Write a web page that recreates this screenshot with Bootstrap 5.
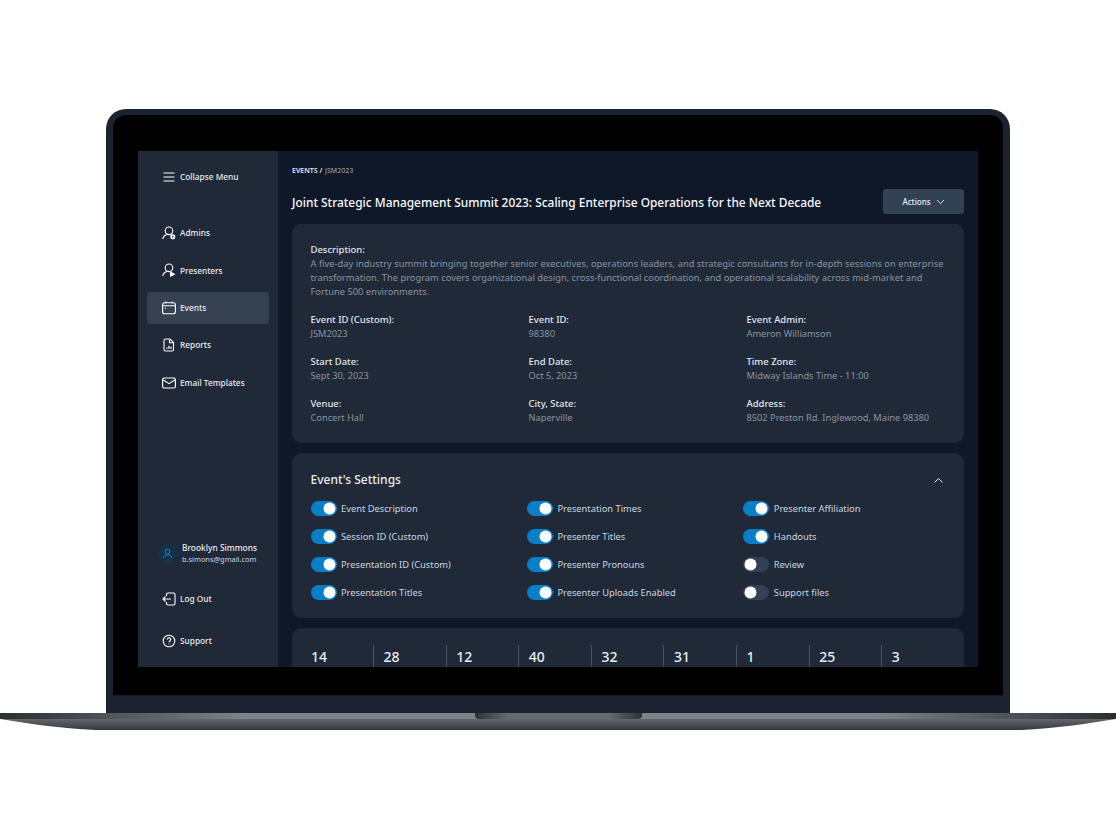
<!DOCTYPE html>
<html lang="en">
<head>
    <meta charset="UTF-8">
    <meta name="viewport" content="width=device-width, initial-scale=1.0">
    <title>Events - JSM2023</title>
    <link href="https://cdn.jsdelivr.net/npm/bootstrap@5.3.0/dist/css/bootstrap.min.css" rel="stylesheet">
    <style>
        html, body { height: 840px; overflow: hidden; background: #fff; }
        body { font-family: "Noto Sans", sans-serif; padding-top: 109px; }

        /* laptop */
        .lid { width: 904px; height: 604px; margin: 0 auto; padding: 6px 7px 18px; background: #1b2230; border-radius: 20px 20px 0 0; }
        .bezel { height: 581px; padding: 36px 25px 28px; background: #000; border-radius: 13px 13px 0 0; border-bottom: 1px solid #141925; }
        .base { display: block; width: 1116px; height: 18px; }

        /* app */
        .app { height: 516px; overflow: hidden; background: #0f1829; color: #fff; }
        .side { width: 140px; background: #1f2937; padding: 10px 9.5px 10px 9px; }
        .side-link { height: 32px; padding: 1px 0 0 15px; gap: 4px; font-size: 8.3px; font-weight: 500; color: #e8edf3; border-radius: 4px; margin-bottom: 5.4px; text-decoration: none; }
        .side-link svg { width: 14px; height: 14px; flex: none; margin-top: -1px; }
        .side-link.on { background: #364152; }
        .collapse-row { margin-bottom: 24px; }
        .who { padding-left: 11px; gap: 5px; margin-bottom: 18.5px; }
        .who-pic { width: 19px; height: 19px; border-radius: 50%; background: #16324a; }
        .who-name { font-size: 8.4px; font-weight: 500; line-height: 11px; color: #e8edf3; }
        .who-mail { font-size: 7.4px; line-height: 12px; color: #cbd5e1; }
        .side-out { margin-bottom: 10px; }
        .side-end { margin-bottom: 0; }

        .main-col { padding: 0 14px; min-width: 0; }
        .crumbs { font-size: 7px; font-weight: 600; line-height: 10px; padding-top: 15px; color: #e2e8f0; }
        .crumbs span { font-weight: 400; color: #a3adba; margin-left: 1px; }
        .title-row { margin-top: 8px; height: 40px; padding-bottom: 5px; }
        .page-title { font-size: 11.92px; font-weight: 500; margin: 0; padding-top: 1px; color: #f8fafc; }
        .act-btn { width: 81px; height: 25px; padding: 0; font-size: 8px; font-weight: 500; color: #e8edf3; background: #334155; border: 0; border-radius: 3px; gap: 5px; }
        .panel { background: #1f2937; border-radius: 9px; padding: 19px 18.5px 0; margin-bottom: 10px; }
        .lbl { font-size: 9.45px; font-weight: 500; line-height: 14px; color: #e2e8f0; }
        .val { font-size: 9.25px; line-height: 14px; color: #8a94a3; }
        .desc { font-size: 9.34px; }
        .info-grid { display: grid; grid-template-columns: repeat(3, 218px); row-gap: 14px; margin-top: 14px; }
        .info-panel { height: 219px; }
        .set-panel { height: 165px; padding-top: 18px; }
        .set-title { font-size: 12px; font-weight: 500; color: #e8edf3; margin: 0; line-height: 18px; }
        .set-grid { display: grid; grid-template-columns: repeat(3, 216.4px); row-gap: 13px; margin-top: 12px; }
        .chev { margin-right: 1.5px; }
        .tog { min-height: 15px; padding-left: 0; margin: 0; gap: 4.5px; }
        .tog .form-check-input { width: 26px; height: 15px; margin: 0; float: none; border: 0; background-color: #334155; background-image: url("data:image/svg+xml,%3csvg xmlns='http://www.w3.org/2000/svg' viewBox='-4 -4 8 8'%3e%3ccircle r='3.2' fill='%23fff'/%3e%3c/svg%3e"); }
        .tog .form-check-input:checked { background-color: #0a7fc9; }
        .tog .form-check-label { font-size: 9.3px; line-height: 15px; color: #cbd5e1; }
        .num-panel { padding: 17px 0 0 8.5px; height: 60px; }
        .num-grid { display: grid; grid-template-columns: repeat(9, 72.6px); }
        .num-cell { padding-left: 9.5px; font-size: 14px; font-weight: 500; line-height: 24px; color: #e8edf3; border-left: 1px solid #475569; }
        .num-cell:first-child { border-left-color: transparent; }
    </style>
</head>
<body>
    <div class="lid">
        <div class="bezel">
            <div class="app d-flex">
                <!-- sidebar -->
                <div class="side d-flex flex-column flex-shrink-0">
                    <a class="side-link collapse-row d-flex align-items-center" href="#">
                        <svg viewBox="0 0 14 14" fill="none" stroke="#fff" stroke-width="1"><path d="M1.500 3h11M1.500 7h11M1.500 11h11"/></svg>
                        Collapse Menu
                    </a>
                    <a class="side-link d-flex align-items-center" href="#">
                        <svg viewBox="0 0 14 14" fill="none" stroke="#fff" stroke-width="1.100"><circle cx="7" cy="4.800" r="3.800"/><path d="M.7 13c.5-2.300 2-3.800 3.900-4.500"/><circle cx="10.800" cy="10.800" r="1.700" stroke-width="1.700"/></svg>
                        Admins
                    </a>
                    <a class="side-link d-flex align-items-center" href="#">
                        <svg viewBox="0 0 14 14" fill="none" stroke="#fff" stroke-width="1.100"><circle cx="7" cy="4.800" r="3.800"/><path d="M.7 13c.5-2.300 2-3.800 3.900-4.500"/><path d="M8 8.200l5.500 3-5.500 2.800z" fill="#fff" stroke="none"/></svg>
                        Presenters
                    </a>
                    <a class="side-link on d-flex align-items-center" href="#">
                        <svg viewBox="0 0 14 14" fill="none" stroke="#fff" stroke-width="1.100"><rect x=".6" y="1.800" width="12.800" height="11" rx="2"/><path d="M.6 4.800h12.800M3.800 .6v1.600M10.200 .6v1.600M2.800 7.200h1.200"/></svg>
                        Events
                    </a>
                    <a class="side-link d-flex align-items-center" href="#">
                        <svg viewBox="0 0 14 14" fill="none" stroke="#fff" stroke-width="1.100"><path d="M3.500 1h4.500l3.500 3.500v7a1.500 1.500 0 0 1-1.500 1.500H3.500A1.500 1.500 0 0 1 2 11.500v-9A1.500 1.500 0 0 1 3.500 1z"/><path d="M7.500 1v3.800h4"/><path d="M5 10.800V9.600M7 10.800V7.800M9 10.800V8.800" stroke-width="1.300"/></svg>
                        Reports
                    </a>
                    <a class="side-link d-flex align-items-center" href="#">
                        <svg viewBox="0 0 14 14" fill="none" stroke="#fff" stroke-width="1.100"><rect x=".6" y="2" width="12.800" height="10" rx="1.500"/><path d="M1 3.800l6 3.800 6-3.800"/></svg>
                        Email Templates
                    </a>

                    <div class="who d-flex align-items-center mt-auto">
                        <div class="who-pic d-flex align-items-center justify-content-center flex-shrink-0">
                            <svg width="11" height="11" viewBox="0 0 11 11" fill="none" stroke="#1d87c9" stroke-width="1"><circle cx="5.500" cy="3.500" r="2.300"/><path d="M1.400 10c.4-2 2-3.200 4.100-3.200S9.200 8 9.600 10"/></svg>
                        </div>
                        <div>
                            <div class="who-name">Brooklyn Simmons</div>
                            <div class="who-mail">b.simons@gmail.com</div>
                        </div>
                    </div>
                    <a class="side-link side-out d-flex align-items-center" href="#">
                        <svg viewBox="0 0 14 14" fill="none" stroke="#fff" stroke-width="1.100"><path d="M4.500 4V2.500A1.500 1.500 0 0 1 6 1h5.500A1.500 1.500 0 0 1 13 2.500v9a1.500 1.500 0 0 1-1.500 1.500H6a1.500 1.500 0 0 1-1.500-1.500V10"/><path d="M9 7H1M3.500 4.500L1 7l2.500 2.500"/></svg>
                        Log Out
                    </a>
                    <a class="side-link side-end d-flex align-items-center" href="#">
                        <svg viewBox="0 0 14 14" fill="none" stroke="#fff" stroke-width="1.100"><circle cx="7" cy="7" r="5.800"/><path d="M5.300 5.500a1.700 1.700 0 1 1 2.600 1.500c-.6.400-.9.700-.9 1.300"/><path d="M7 9.700v.8"/></svg>
                        Support
                    </a>
                </div>

                <!-- content -->
                <div class="main-col flex-grow-1">
                    <div class="crumbs">EVENTS / <span>JSM2023</span></div>
                    <div class="title-row d-flex align-items-center justify-content-between">
                        <h1 class="page-title">Joint Strategic Management Summit 2023: Scaling Enterprise Operations for the Next Decade</h1>
                        <button class="act-btn btn d-flex align-items-center justify-content-center flex-shrink-0">
                            Actions
                            <svg width="9" height="9" viewBox="0 0 9 9" fill="none" stroke="#e8edf3" stroke-width=".9"><path d="M1 3l3.500 3.500L8 3"/></svg>
                        </button>
                    </div>

                    <div class="panel info-panel">
                        <div class="lbl">Description:</div>
                        <div class="val desc">A five-day industry summit bringing together senior executives, operations leaders, and strategic consultants for in-depth sessions on enterprise transformation. The program covers organizational design, cross-functional coordination, and operational scalability across mid-market and Fortune 500 environments.</div>
                        <div class="info-grid">
                            <div><div class="lbl">Event ID (Custom):</div><div class="val">JSM2023</div></div>
                            <div><div class="lbl">Event ID:</div><div class="val">98380</div></div>
                            <div><div class="lbl">Event Admin:</div><div class="val">Ameron Williamson</div></div>
                            <div><div class="lbl">Start Date:</div><div class="val">Sept 30, 2023</div></div>
                            <div><div class="lbl">End Date:</div><div class="val">Oct 5, 2023</div></div>
                            <div><div class="lbl">Time Zone:</div><div class="val">Midway Islands Time - 11:00</div></div>
                            <div><div class="lbl">Venue:</div><div class="val">Concert Hall</div></div>
                            <div><div class="lbl">City, State:</div><div class="val">Naperville</div></div>
                            <div><div class="lbl">Address:</div><div class="val">8502 Preston Rd. Inglewood, Maine 98380</div></div>
                        </div>
                    </div>

                    <div class="panel set-panel">
                        <div class="d-flex align-items-center justify-content-between">
                            <h2 class="set-title">Event's Settings</h2>
                            <svg class="chev" width="11" height="11" viewBox="0 0 11 11" fill="none" stroke="#e8edf3" stroke-width="1"><path d="M1.500 7.500L5.500 3.500l4 4"/></svg>
                        </div>
                        <div class="set-grid">
                            <div class="form-check form-switch tog d-flex align-items-center"><input class="form-check-input" type="checkbox" id="s1" checked><label class="form-check-label" for="s1">Event Description</label></div>
                            <div class="form-check form-switch tog d-flex align-items-center"><input class="form-check-input" type="checkbox" id="s2" checked><label class="form-check-label" for="s2">Presentation Times</label></div>
                            <div class="form-check form-switch tog d-flex align-items-center"><input class="form-check-input" type="checkbox" id="s3" checked><label class="form-check-label" for="s3">Presenter Affiliation</label></div>
                            <div class="form-check form-switch tog d-flex align-items-center"><input class="form-check-input" type="checkbox" id="s4" checked><label class="form-check-label" for="s4">Session ID (Custom)</label></div>
                            <div class="form-check form-switch tog d-flex align-items-center"><input class="form-check-input" type="checkbox" id="s5" checked><label class="form-check-label" for="s5">Presenter Titles</label></div>
                            <div class="form-check form-switch tog d-flex align-items-center"><input class="form-check-input" type="checkbox" id="s6" checked><label class="form-check-label" for="s6">Handouts</label></div>
                            <div class="form-check form-switch tog d-flex align-items-center"><input class="form-check-input" type="checkbox" id="s7" checked><label class="form-check-label" for="s7">Presentation ID (Custom)</label></div>
                            <div class="form-check form-switch tog d-flex align-items-center"><input class="form-check-input" type="checkbox" id="s8" checked><label class="form-check-label" for="s8">Presenter Pronouns</label></div>
                            <div class="form-check form-switch tog d-flex align-items-center"><input class="form-check-input" type="checkbox" id="s9"><label class="form-check-label" for="s9">Review</label></div>
                            <div class="form-check form-switch tog d-flex align-items-center"><input class="form-check-input" type="checkbox" id="s10" checked><label class="form-check-label" for="s10">Presentation Titles</label></div>
                            <div class="form-check form-switch tog d-flex align-items-center"><input class="form-check-input" type="checkbox" id="s11" checked><label class="form-check-label" for="s11">Presenter Uploads Enabled</label></div>
                            <div class="form-check form-switch tog d-flex align-items-center"><input class="form-check-input" type="checkbox" id="s12"><label class="form-check-label" for="s12">Support files</label></div>
                        </div>
                    </div>

                    <div class="panel num-panel">
                        <div class="num-grid">
                            <div class="num-cell">14</div>
                            <div class="num-cell">28</div>
                            <div class="num-cell">12</div>
                            <div class="num-cell">40</div>
                            <div class="num-cell">32</div>
                            <div class="num-cell">31</div>
                            <div class="num-cell">1</div>
                            <div class="num-cell">25</div>
                            <div class="num-cell">3</div>
                        </div>
                    </div>
                </div>
            </div>
        </div>
    </div>

    <!-- laptop base -->
    <svg class="base" viewBox="0 0 1116 18">
        <defs>
            <linearGradient id="topband" x1="0" x2="1" y1="0" y2="0">
                <stop offset="0" stop-color="#2b2e33"/>
                <stop offset=".1" stop-color="#50555b"/>
                <stop offset=".22" stop-color="#7d838a"/>
                <stop offset=".78" stop-color="#7d838a"/>
                <stop offset=".9" stop-color="#50555b"/>
                <stop offset="1" stop-color="#2b2e33"/>
            </linearGradient>
            <linearGradient id="lowband" x1="0" x2="0" y1="0" y2="1">
                <stop offset="0" stop-color="#63676c"/>
                <stop offset="1" stop-color="#35383c"/>
            </linearGradient>
            <linearGradient id="notch" x1="0" x2="1" y1="0" y2="0">
                <stop offset="0" stop-color="#2d3035"/>
                <stop offset=".2" stop-color="#666b70"/>
                <stop offset=".8" stop-color="#666b70"/>
                <stop offset="1" stop-color="#2d3035"/>
            </linearGradient>
        </defs>
        <path d="M0 6C30 11 60 15 95 17H1021C1056 15 1086 11 1116 6z" fill="url(#lowband)"/>
        <rect width="1116" height="6" fill="url(#topband)"/>
        <path d="M475 0H642V2a4 4 0 0 1-4 4H479a4 4 0 0 1-4-4z" fill="url(#notch)"/>
    </svg>
</body>
</html>
